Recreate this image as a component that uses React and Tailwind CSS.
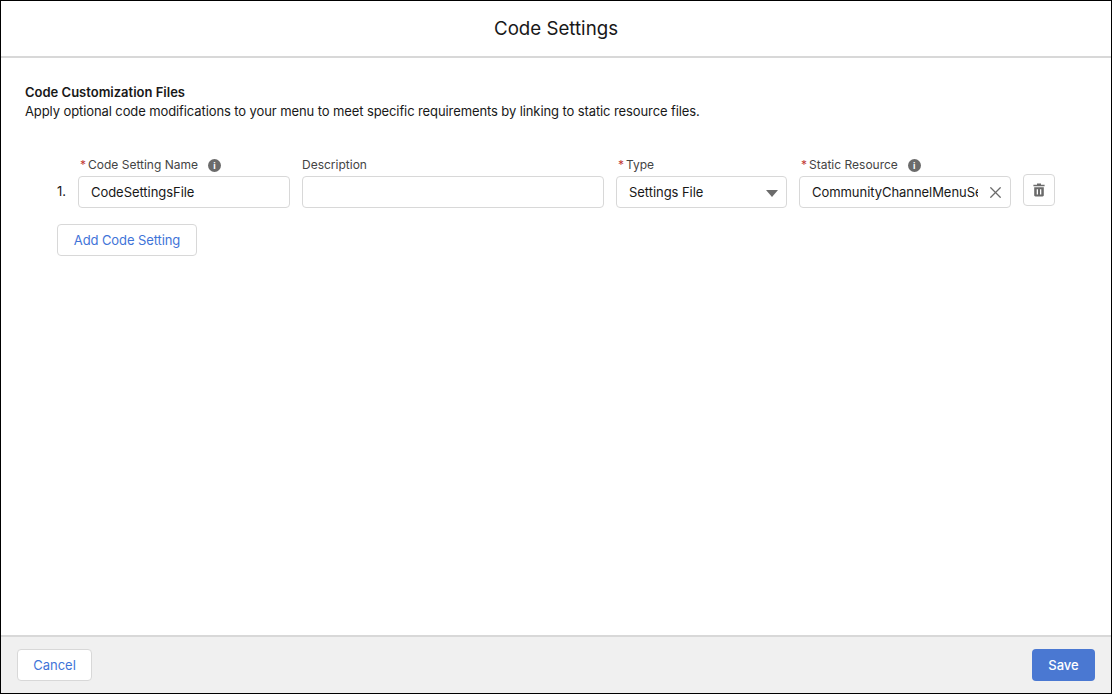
import { X } from 'lucide-react';

function Label({ text, required, info }) {
  return (
    <div className="flex items-center h-[18px] text-[12px] text-[#444444] leading-[18px]">
      {required && <span className="text-[#c23934] ml-[2px] mr-[2px]">*</span>}
      <span>{text}</span>
      {info && (
        <span className="ml-[10px] w-[13px] h-[13px] rounded-full bg-[#6b6b6b] flex items-center justify-center text-white text-[9px] font-bold leading-none">
          i
        </span>
      )}
    </div>
  );
}

function Field({ width, children }) {
  return (
    <div
      className={`flex items-center h-[32px] mt-[2px] bg-white border border-[#d8d8d8] rounded-[4px] pl-[12px] pt-[2px] text-[13px] tracking-[-0.05px] text-[#181818] ${width}`}
    >
      {children}
    </div>
  );
}

function TrashIcon() {
  return (
    <svg width="14" height="14" viewBox="0 0 14 14" fill="#6b6b6b">
      <path d="M5 0.5h4v1.2h3.6v1.6H1.4V1.7H5z" />
      <path fillRule="evenodd" d="M2.2 4.3h9.6v8c0 .7-.5 1.2-1.2 1.2H3.4c-.7 0-1.2-.5-1.2-1.2zM4.7 6.2v5.4h1.3V6.2zM8 6.2v5.4h1.3V6.2z" />
    </svg>
  );
}

export default function App() {
  return (
    <div className="w-[1112px] h-[694px] flex flex-col bg-white border border-black font-['Inter',sans-serif] overflow-hidden">
      {/* Header */}
      <div className="h-[57px] shrink-0 flex items-center justify-center border-b-2 border-[#d8d8d8]">
        <h1 className="text-[18.7px] text-[#181818] pt-[1px]">Code Settings</h1>
      </div>

      {/* Body */}
      <div className="flex-1 pt-[25px] pl-[24px] pr-[24px]">
        <div className="text-[13px] font-semibold leading-[18px] text-[#181818]">Code Customization Files</div>
        <p className="text-[13px] leading-[20px] tracking-[-0.1px] text-[#181818]">
          Apply optional code modifications to your menu to meet specific requirements by linking to static resource files.
        </p>

        <div className="mt-[35px] pl-[32px] flex items-start">
          <div className="w-[21px] pt-[20px] h-[52px] flex items-center text-[13px] text-[#181818]">1.</div>
          <div className="w-[224px]">
            <Label text="Code Setting Name" required info />
            <Field width="w-[212px]">CodeSettingsFile</Field>
          </div>
          <div className="w-[314px]">
            <Label text="Description" />
            <Field width="w-[302px]" />
          </div>
          <div className="w-[183px]">
            <Label text="Type" required />
            <Field width="w-[171px] justify-between pr-[8px]">
              <span>Settings File</span>
              <span className="w-0 h-0 border-x-[6px] border-x-transparent border-t-[7px] border-t-[#6b6b6b]" />
            </Field>
          </div>
          <div className="w-[224px]">
            <Label text="Static Resource" required info />
            <Field width="w-[212px] pr-[5px]">
              <span className="flex-1 overflow-hidden whitespace-nowrap">CommunityChannelMenuSettings</span>
              <X size={19} strokeWidth={1.6} className="ml-[8px] mb-[2px] shrink-0 text-[#6b6b6b]" />
            </Field>
          </div>
          <button className="w-[32px] h-[32px] mt-[18px] flex items-center justify-center bg-white border border-[#d8d8d8] rounded-[4px]">
            <TrashIcon />
          </button>
        </div>

        <button className="ml-[32px] mt-[16px] w-[140px] h-[32px] bg-white border border-[#d8d8d8] rounded-[4px] pt-[1px] text-[13px] tracking-[-0.1px] text-[#3f74d8]">
          Add Code Setting
        </button>
      </div>

      {/* Footer */}
      <div className="h-[58px] shrink-0 flex items-center justify-between px-[16px] bg-[#f0f0f0] border-t-2 border-[#d8d8d8]">
        <button className="w-[75px] h-[32px] bg-white border border-[#d8d8d8] rounded-[4px] pt-[1px] text-[13px] text-[#3f74d8]">
          Cancel
        </button>
        <button className="w-[63px] h-[32px] bg-[#4a78d2] rounded-[4px] pt-[1px] text-[13px] font-medium text-white">
          Save
        </button>
      </div>
    </div>
  );
}
